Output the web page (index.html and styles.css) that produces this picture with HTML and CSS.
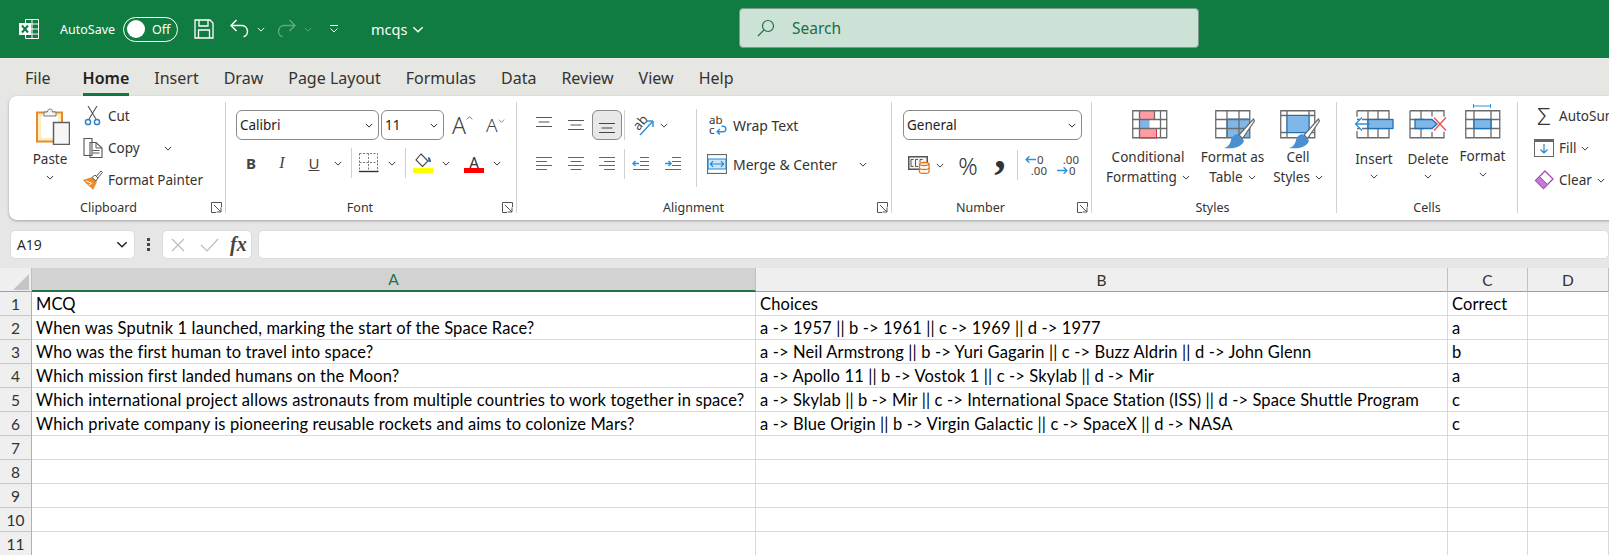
FILE: index.html
```html
<!DOCTYPE html>
<html>
<head>
<meta charset="utf-8">
<title>mcqs - Excel</title>
<link rel="stylesheet" href="styles.css">
</head>
<body>
<svg class="defs" width="0" height="0">
  <symbol id="chev" viewBox="0 0 10 6"><path d="M1 1l4 4 4-4" fill="none" stroke="currentColor" stroke-width="1.2"/></symbol>
  <symbol id="launch" viewBox="0 0 11 11"><path d="M10.500 5V.5H.5v10H5M3 3l7 7M10 5.500V10H5.500" fill="none" stroke="#555" stroke-width="1"/></symbol>
  <symbol id="brush" viewBox="0 0 40 39"><path d="M38.500 9L24 25l3.500 3.500L39.500 11z" fill="#fff" stroke="#666" stroke-width="1.200"/><path d="M22.500 24l6.500 6.500c-1 5-8 9-20 7.500 4-1 6-3.500 7-8 .5-3 3-5.500 6.500-6z" fill="#4a90d0"/></symbol>
</svg>

<header class="titlebar">
  <svg class="logo" width="20" height="20" viewBox="0 0 20 20">
    <path d="M6.500.5h13v19h-13zM13 .5v19M6.500 5h13M6.500 10h13M6.500 15h13" fill="none" stroke="#fff"/>
    <rect y="4" width="12" height="12" fill="#fff"/>
    <path d="M3 6.500l6 7M9 6.500l-6 7" stroke="#107c41" stroke-width="2"/>
  </svg>
  <span class="autosave">AutoSave</span>
  <span class="toggle"><i class="knob"></i>Off</span>
  <svg class="qat save" width="20" height="20" viewBox="0 0 20 20"><path d="M1 1h15l3 3v15H1zM5 1v6h9V1M4.500 19v-8h11v8" fill="none" stroke="#fff" stroke-width="1.300"/></svg>
  <svg class="qat undo" width="19" height="20" viewBox="0 0 19 20"><path d="M1.500 6.500h10a5.800 5.800 0 0 1 2 11.300M6.500 1L1 6.500l5.500 5.500" fill="none" stroke="#fff" stroke-width="1.500"/></svg>
  <svg class="title-chev" width="8" height="5"><use href="#chev"/></svg>
  <svg class="qat redo" width="19" height="20" viewBox="0 0 19 20"><path d="M17.500 6.500h-10a5.800 5.800 0 0 0-2 11.300M12.500 1l5.500 5.500-5.500 5.500" fill="none" stroke="#5fa884" stroke-width="1.500"/></svg>
  <svg class="title-chev dim" width="8" height="5"><use href="#chev"/></svg>
  <svg class="qat more" width="10" height="8" viewBox="0 0 10 8"><path d="M1 .5h8M1.500 3.500L5 7l3.500-3.500" fill="none" stroke="#fff" stroke-width="1"/></svg>
  <span class="docname">mcqs</span>
  <svg class="doc-chev" width="12" height="7"><use href="#chev"/></svg>
  <div class="search">
    <svg width="18" height="18" viewBox="0 0 18 18"><circle cx="11" cy="7" r="5.500" fill="none" stroke="#1f6e43" stroke-width="1.200"/><path d="M7 11l-6 6" stroke="#1f6e43" stroke-width="1.200"/></svg>
    <span>Search</span>
  </div>
</header>

<nav class="tabs">
  <span class="tab">File</span>
  <span class="tab active">Home</span>
  <span class="tab">Insert</span>
  <span class="tab">Draw</span>
  <span class="tab">Page Layout</span>
  <span class="tab">Formulas</span>
  <span class="tab">Data</span>
  <span class="tab">Review</span>
  <span class="tab">View</span>
  <span class="tab">Help</span>
</nav>

<section class="ribbon">

  <div class="group g-clip">
    <div class="group-body">
      <div class="paste">
        <svg width="34" height="38" viewBox="0 0 34 38">
          <rect x="1" y="5.500" width="25" height="29" fill="#fdeec2" stroke="#e8892b" stroke-width="2"/>
          <rect x="5" y="9" width="17" height="22" fill="#fff"/>
          <path d="M8 9V5h3.500c0-4 5-4 5 0H20v4z" fill="#f4f4f4" stroke="#777"/>
          <rect x="17.500" y="15.500" width="16" height="22" fill="#f6f6f6" stroke="#5f5f5f" stroke-width="1.500"/>
        </svg>
        <span class="paste-label">Paste</span>
        <svg class="chev" width="8" height="5"><use href="#chev"/></svg>
      </div>
      <div class="small-col">
        <div class="small-row">
          <svg width="20" height="20" viewBox="0 0 20 20"><path d="M5 0l8 13M14 0L6 13" stroke="#555" stroke-width="1.100" fill="none"/><circle cx="5" cy="16" r="2.600" fill="#fff" stroke="#2b83c6" stroke-width="1.500"/><circle cx="14" cy="16" r="2.600" fill="#fff" stroke="#2b83c6" stroke-width="1.500"/></svg>
          <span>Cut</span>
        </div>
        <div class="small-row">
          <svg width="20" height="20" viewBox="0 0 20 20"><path d="M1 .5h8v17H1zM7 4.500h6l6 5.500v9.500H7z" fill="#fff" stroke="#555" stroke-width="1.100"/><path d="M13 4.500V10h6M9.500 12.500h7M9.500 15h7" fill="none" stroke="#555"/></svg>
          <span>Copy</span>
          <svg class="chev copy-chev" width="8" height="5"><use href="#chev"/></svg>
        </div>
        <div class="small-row">
          <svg width="20" height="20" viewBox="0 0 20 20"><path d="M0 10l9-3 5 5-4 8c-1-2-6-5-10-10z" fill="#ed8b2d"/><path d="M3 11l5 2M6 15l3-2" stroke="#fff"/><path d="M12 8l6-7 1.500 1.500-6 7z" fill="#fff" stroke="#555"/><path d="M9 7.500l3-2.500 3 3-2 3z" fill="#fff" stroke="#555"/></svg>
          <span>Format Painter</span>
        </div>
      </div>
    </div>
    <div class="group-label">Clipboard</div>
    <svg class="launcher" width="11" height="11"><use href="#launch"/></svg>
  </div>

  <div class="group g-font">
    <div class="group-body rows font-rows">
      <div class="row">
        <div class="combo font-name"><span>Calibri</span><svg width="8" height="5"><use href="#chev"/></svg></div>
        <div class="combo font-size"><span>11</span><svg width="8" height="5"><use href="#chev"/></svg></div>
        <span class="grow">A<svg width="7" height="4" viewBox="0 0 10 6"><path d="M1 5l4-4 4 4" fill="none" stroke="currentColor" stroke-width="1.500"/></svg></span>
        <span class="shrink">A<svg width="7" height="4"><use href="#chev"/></svg></span>
      </div>
      <div class="row">
        <span class="slot w30 bold">B</span>
        <span class="slot w32 italic">I</span>
        <span class="slot w32 under">U</span>
        <span class="slot w16"><svg class="chev" width="8" height="5"><use href="#chev"/></svg></span>
        <i class="vsep m55"></i>
        <span class="slot w24">
          <svg width="20" height="20" viewBox="0 0 20 20"><path d="M.5.500h18v18M.5.500v18M9.500.500v18M.5 9.500h18" fill="none" stroke="#777" stroke-dasharray="2 1.500"/><path d="M0 18.500h19.500" stroke="#333" stroke-width="1.400"/></svg>
        </span>
        <span class="slot w22"><svg class="chev" width="8" height="5"><use href="#chev"/></svg></span>
        <i class="vsep m25"></i>
        <span class="slot w24 swatch-slot">
          <svg width="20" height="20" viewBox="0 0 20 20"><path d="M8 1l7 7-5.500 5.500L3 7z" fill="#fff" stroke="#444" stroke-width="1.100"/><path d="M15 4c2 0 3 2 3 5h-2.500z" fill="#2b6ea8"/><rect y="15" width="20" height="5" fill="#ffff00"/></svg>
        </span>
        <span class="slot w22"><svg class="chev" width="8" height="5"><use href="#chev"/></svg></span>
        <span class="slot w24 color-a">A</span>
        <span class="slot w22"><svg class="chev" width="8" height="5"><use href="#chev"/></svg></span>
      </div>
    </div>
    <div class="group-label">Font</div>
    <svg class="launcher" width="11" height="11"><use href="#launch"/></svg>
  </div>

  <div class="group g-align">
    <div class="group-body align-body">
      <div class="rows align-rows">
        <div class="row">
          <span class="slot w32"><svg width="18" height="20" viewBox="0 0 18 20"><path d="M1 2.500h16M3.500 7h11M1 11.500h16" stroke="#555" fill="none"/></svg></span>
          <span class="slot w32"><svg width="18" height="20" viewBox="0 0 18 20"><path d="M1 5.500h16M3.500 10h11M1 14.500h16" stroke="#555" fill="none"/></svg></span>
          <span class="slot w30 pressed"><svg width="18" height="20" viewBox="0 0 18 20"><path d="M1 8.500h16M3.500 13h11M1 17.500h16" stroke="#444" fill="none"/></svg></span>
          <i class="vsep m3"></i>
          <span class="slot orient-slot">
            <svg width="22" height="24" viewBox="0 0 22 24"><path d="M7 22L20 8M20 8h-6M20 8v6" stroke="#2b93dc" stroke-width="1.500" fill="none"/><text x="1" y="14" class="orient" transform="rotate(-50 8 11)">ab</text></svg>
          </span>
          <span class="slot w18"><svg class="chev" width="8" height="5"><use href="#chev"/></svg></span>
        </div>
        <div class="row">
          <span class="slot w32"><svg width="18" height="18" viewBox="0 0 18 18"><path d="M1 2.500h16M1 6.500h11M1 10.500h16M1 14.500h11" stroke="#666" fill="none"/></svg></span>
          <span class="slot w32"><svg width="18" height="18" viewBox="0 0 18 18"><path d="M1 2.500h16M3.500 6.500h11M1 10.500h16M3.500 14.500h11" stroke="#666" fill="none"/></svg></span>
          <span class="slot w30"><svg width="18" height="18" viewBox="0 0 18 18"><path d="M1 2.500h16M6 6.500h11M1 10.500h16M6 14.500h11" stroke="#666" fill="none"/></svg></span>
          <i class="vsep m3"></i>
          <span class="slot w32"><svg width="18" height="18" viewBox="0 0 18 18"><path d="M8 2.500h9M8 6.500h9M8 10.500h9M1 14.500h16" stroke="#666" fill="none"/><path d="M1 8.500h6M3.500 6L1 8.500 3.500 11" stroke="#2b93dc" fill="none" stroke-width="1.500"/></svg></span>
          <span class="slot w32"><svg width="18" height="18" viewBox="0 0 18 18"><path d="M8 2.500h9M8 6.500h9M8 10.500h9M1 14.500h16" stroke="#666" fill="none"/><path d="M1 8.500h6M4.500 6L7 8.500 4.500 11" stroke="#2b93dc" fill="none" stroke-width="1.500"/></svg></span>
        </div>
      </div>
      <i class="vsep tall"></i>
      <div class="rows wrap-col">
        <div class="row wrap-row">
          <span class="wrap-ic"><span class="wrap-ab">ab</span><span class="wrap-c">c</span>
            <svg width="11" height="11" viewBox="0 0 10 10"><path d="M1 7h5.500a2.500 2.500 0 0 0 0-5H5M3.500 4.500L1 7l2.500 2.500" fill="none" stroke="#2b93dc" stroke-width="1.300"/></svg>
          </span>
          <span>Wrap Text</span>
        </div>
        <div class="row wrap-row">
          <svg class="merge-ic" width="20" height="20" viewBox="0 0 18 18"><rect x=".5" y=".5" width="17" height="17" fill="#fff" stroke="#666"/><rect x="1" y="4.500" width="16" height="9" fill="#cfe6f8" stroke="#2b93dc"/><path d="M3 9h12M5.500 6.500L3 9l2.500 2.500M12.500 6.500L15 9l-2.500 2.500" fill="none" stroke="#2b83c6"/></svg>
          <span>Merge &amp; Center</span>
          <svg class="chev merge-chev" width="8" height="5"><use href="#chev"/></svg>
        </div>
      </div>
    </div>
    <div class="group-label">Alignment</div>
    <svg class="launcher" width="11" height="11"><use href="#launch"/></svg>
  </div>

  <div class="group g-num">
    <div class="group-body rows">
      <div class="row">
        <div class="combo num-format"><span>General</span><svg width="8" height="5"><use href="#chev"/></svg></div>
      </div>
      <div class="row">
        <span class="slot money">
          <svg width="22" height="18" viewBox="0 0 22 18">
            <rect x=".75" y=".75" width="18.500" height="12.500" fill="#f4f4f4" stroke="#555" stroke-width="1.500"/>
            <path d="M5.500 3.500H3v7h2.500M10 3.500H7.500v7H10M14.500 3.500H12v3" fill="none" stroke="#555"/>
            <path d="M11.500 8c0-2 9.500-2 9.500 0v8c0 2-9.500 2-9.500 0z" fill="#fff" stroke="#e3761c" stroke-width="1.300"/>
            <path d="M11.500 8c0 2 9.500 2 9.500 0M11.500 12c0 2 9.500 2 9.500 0" fill="none" stroke="#e3761c" stroke-width="1.300"/>
          </svg>
        </span>
        <span class="slot w20"><svg class="chev" width="8" height="5"><use href="#chev"/></svg></span>
        <span class="slot percent">%</span>
        <span class="slot comma">,</span>
        <i class="vsep num-sep"></i>
        <span class="slot dec">
          <svg width="11" height="9" viewBox="0 0 10 8"><path d="M10 4H1M4 1L1 4l3 3" fill="none" stroke="#2b93dc" stroke-width="1.200"/></svg><b>0</b><em>.00</em>
        </span>
        <span class="slot dec dec2">
          <em>.00</em><svg width="11" height="9" viewBox="0 0 10 8"><path d="M0 4h9M6 1l3 3-3 3" fill="none" stroke="#2b93dc" stroke-width="1.200"/></svg><b>0</b>
        </span>
      </div>
    </div>
    <div class="group-label">Number</div>
    <svg class="launcher" width="11" height="11"><use href="#launch"/></svg>
  </div>

  <div class="group g-styles">
    <div class="group-body big-row">
      <div class="big w112">
        <svg class="tall-ic" width="36" height="39" viewBox="0 0 36 39">
          <rect x="7.500" y=".5" width="15" height="9" fill="#ff9ba3" stroke="#d8343c"/>
          <rect x="7.500" y="9.500" width="10" height="9" fill="#7fb8e8"/>
          <rect x="7.500" y="18.500" width="17" height="9.500" fill="#ff9ba3" stroke="#d8343c"/>
          <path d="M.75.75h34v27h-34zM7.500.5v28M22.500.5v9M28.500.5v28M.5 9.500h35M.5 18.500h35" fill="none" stroke="#6b6b6b" stroke-width="1.300"/>
        </svg>
        <span class="big-text">Conditional<br>Formatting<svg class="chev inline" width="8" height="5"><use href="#chev"/></svg></span>
      </div>
      <div class="big w57">
        <svg class="tall-ic" width="40" height="39" viewBox="0 0 40 39">
          <rect x="12" y="9" width="23" height="19" fill="#7fb8e8"/>
          <path d="M12 9h23M12 9v19" stroke="#1f6fb5" fill="none"/>
          <path d="M.75.75h34v27h-34zM12 .5v28M24 .5v28M.5 9.500h35M.5 18.500h35" fill="none" stroke="#6b6b6b" stroke-width="1.300"/>
          <use href="#brush" width="40" height="39"/>
        </svg>
        <span class="big-text">Format as<br>Table<svg class="chev inline" width="8" height="5"><use href="#chev"/></svg></span>
      </div>
      <div class="big w74">
        <svg class="tall-ic" width="40" height="39" viewBox="0 0 40 39">
          <path d="M.75.75h34v27h-34zM7 .5v28M29 .5v28M.5 5.500h35M.5 22.500h35" fill="none" stroke="#6b6b6b" stroke-width="1.300"/>
          <rect x="7" y="5.500" width="22" height="17" fill="#7fb8e8" stroke="#1f6fb5"/>
          <use href="#brush" width="40" height="39"/>
        </svg>
        <span class="big-text">Cell<br>Styles<svg class="chev inline" width="8" height="5"><use href="#chev"/></svg></span>
      </div>
    </div>
    <div class="group-label">Styles</div>
  </div>

  <div class="group g-cells">
    <div class="group-body big-row cells-pad">
      <div class="big w52">
        <svg width="40" height="29" viewBox="0 0 40 29">
          <path d="M3 .75h32v27H3M3 .75v6M3 21v7M14 .5v28M24 .5v28M3 9.500h32M3 18.500h32" fill="none" stroke="#6b6b6b" stroke-width="1.300"/>
          <rect x="14" y="9.500" width="25" height="9" fill="#7fb8e8" stroke="#1f6fb5" stroke-width="1.300"/>
          <path d="M16 14H2M8 7.500L1.500 14 8 20.500" fill="#fff" stroke="#2b93dc" stroke-width="1.300"/>
        </svg>
        <span class="big-text cell-text">Insert</span>
        <svg class="chev" width="8" height="5"><use href="#chev"/></svg>
      </div>
      <div class="big w56">
        <svg width="38" height="29" viewBox="0 0 38 29">
          <path d="M1 .75h34v6M1 .75v27h34v-6M1 9.500h14M1 18.500h14M12 .5v28M23 .5v6M23 22v6" fill="none" stroke="#6b6b6b" stroke-width="1.300"/>
          <path d="M6 9.500h17l5 4.500-5 4.500H6z" fill="#7fb8e8" stroke="#1f6fb5" stroke-width="1.300"/>
          <path d="M25 7.500l12 13M37 7.500l-12 13" stroke="#ee4b4b" stroke-width="1.300"/>
        </svg>
        <span class="big-text cell-text">Delete</span>
        <svg class="chev" width="8" height="5"><use href="#chev"/></svg>
      </div>
      <div class="big w53">
        <svg class="fmt-ic" width="36" height="35" viewBox="0 0 36 35">
          <path d="M8 2h18M8.500 0v4M25.500 0v4" stroke="#2b93dc" fill="none"/>
          <path d="M.75 6.750h34v27h-34zM9 6.500v28M26 6.500v28M.5 15.500h35M.5 24.500h35" fill="none" stroke="#6b6b6b" stroke-width="1.300"/>
          <rect x="9" y="15.500" width="17" height="9" fill="#7fb8e8" stroke="#1f6fb5" stroke-width="1.300"/>
        </svg>
        <span class="big-text fmt-text">Format</span>
        <svg class="chev" width="8" height="5"><use href="#chev"/></svg>
      </div>
    </div>
    <div class="group-label">Cells</div>
  </div>

  <div class="group g-edit">
    <div class="group-body">
      <div class="small-col edit-col">
        <div class="small-row"><span class="sigma">&Sigma;</span><span>AutoSum</span></div>
        <div class="small-row">
          <svg width="20" height="18" viewBox="0 0 20 18"><rect x=".5" y=".5" width="19" height="17" fill="#fff" stroke="#666"/><rect y="0" width="20" height="3" fill="#666"/><path d="M10 5v9M6.500 10.500L10 14l3.500-3.500" fill="none" stroke="#2b83c6" stroke-width="1.200"/></svg>
          <span>Fill</span>
          <svg class="chev" width="8" height="5"><use href="#chev"/></svg>
        </div>
        <div class="small-row">
          <svg width="20" height="20" viewBox="0 0 20 20"><path d="M11 1l8 8-9.500 9.500-8-8z" fill="#fff" stroke="#a04eb5" stroke-width="1.300"/><path d="M5.500 6.500l8 8-4 4-8-8z" fill="#c678d6" stroke="#a04eb5"/></svg>
          <span>Clear</span>
          <svg class="chev" width="8" height="5"><use href="#chev"/></svg>
        </div>
      </div>
    </div>
  </div>
</section>

<div class="formula-bar">
  <div class="namebox"><span>A19</span><svg width="12" height="7"><use href="#chev"/></svg></div>
  <span class="dots"><i></i><i></i><i></i></span>
  <div class="fx-box">
    <svg width="16" height="16" viewBox="0 0 16 16"><path d="M2 2l12 12M14 2L2 14" stroke="#bdbdbd" stroke-width="1.200"/></svg>
    <svg width="20" height="16" viewBox="0 0 20 16"><path d="M2 8l6 6L19 2" fill="none" stroke="#bdbdbd" stroke-width="1.200"/></svg>
    <span class="fx">fx</span>
  </div>
  <div class="formula-input"></div>
</div>

<table class="sheet">
  <colgroup><col class="c0"><col class="ca"><col class="cb"><col class="cc"><col class="cd"></colgroup>
  <tr class="heads">
    <th class="corner"><svg width="16" height="16" viewBox="0 0 16 16"><path d="M16 0v16H0z" fill="#c4c4c4"/></svg></th>
    <th class="sel">A</th><th>B</th><th>C</th><th>D</th>
  </tr>
  <tr><th>1</th><td>MCQ</td><td>Choices</td><td>Correct</td><td></td></tr>
  <tr><th>2</th><td>When was Sputnik 1 launched, marking the start of the Space Race?</td><td>a -&gt; 1957 || b -&gt; 1961 || c -&gt; 1969 || d -&gt; 1977</td><td>a</td><td></td></tr>
  <tr><th>3</th><td>Who was the first human to travel into space?</td><td>a -&gt; Neil Armstrong || b -&gt; Yuri Gagarin || c -&gt; Buzz Aldrin || d -&gt; John Glenn</td><td>b</td><td></td></tr>
  <tr><th>4</th><td>Which mission first landed humans on the Moon?</td><td>a -&gt; Apollo 11 || b -&gt; Vostok 1 || c -&gt; Skylab || d -&gt; Mir</td><td>a</td><td></td></tr>
  <tr><th>5</th><td>Which international project allows astronauts from multiple countries to work together in space?</td><td>a -&gt; Skylab || b -&gt; Mir || c -&gt; International Space Station (ISS) || d -&gt; Space Shuttle Program</td><td>c</td><td></td></tr>
  <tr><th>6</th><td>Which private company is pioneering reusable rockets and aims to colonize Mars?</td><td>a -&gt; Blue Origin || b -&gt; Virgin Galactic || c -&gt; SpaceX || d -&gt; NASA</td><td>c</td><td></td></tr>
  <tr><th>7</th><td></td><td></td><td></td><td></td></tr>
  <tr><th>8</th><td></td><td></td><td></td><td></td></tr>
  <tr><th>9</th><td></td><td></td><td></td><td></td></tr>
  <tr><th>10</th><td></td><td></td><td></td><td></td></tr>
  <tr><th>11</th><td></td><td></td><td></td><td></td></tr>
</table>
</body>
</html>
```

FILE: styles.css
```css
* {
  box-sizing: border-box;
}
html, body {
  margin: 0;
  height: 555px;
  overflow: hidden;
}
body {
  width: 1609px;
  background: #e6e6e6;
  font-family: "Noto Sans", sans-serif;
  font-size: 13.5px;
  color: #333;
}
svg {
  display: block;
  flex: none;
}
.defs {
  position: absolute;
}
i, em {
  font-style: normal;
}

/* title bar */
.titlebar {
  height: 58px;
  background: #107c41;
  color: #fff;
  display: flex;
  align-items: center;
  padding-left: 19px;
}
.autosave {
  margin-left: 21px;
  font-size: 12.5px;
  width: 63px;
}
.toggle {
  width: 55px;
  height: 25px;
  border: 1.500px solid #fff;
  border-radius: 13px;
  display: flex;
  align-items: center;
  padding-left: 3px;
  font-size: 12.5px;
  gap: 7px;
}
.knob {
  width: 18px;
  height: 18px;
  border-radius: 50%;
  background: #fff;
}
.save {
  margin-left: 16px;
}
.undo {
  margin-left: 16px;
}
.title-chev {
  margin-left: 8px;
  color: #fff;
}
.title-chev.dim {
  color: #5fa884;
}
.redo {
  margin-left: 12px;
}
.more {
  margin-left: 17px;
}
.docname {
  margin-left: 32px;
  font-size: 14.5px;
  width: 36px;
}
.doc-chev {
  margin-left: 5px;
  color: #fff;
}
.search {
  margin-left: 315px;
  margin-top: -2px;
  width: 460px;
  height: 40px;
  background: #cde2d7;
  border: 1px solid #7c9c8a;
  border-radius: 4px;
  color: #1f6e43;
  font-size: 15.5px;
  display: flex;
  align-items: center;
  gap: 17px;
  padding-left: 17px;
}

/* tabs */
.tabs {
  height: 38px;
  background: #e6e6e2;
  display: flex;
  padding-left: 25px;
  gap: 25px;
  font-size: 16px;
  line-height: 40px;
  color: #333;
}
.tab {
  height: 38px;
}
.tab.active {
  font-weight: 600;
  border-bottom: 3px solid #107c41;
  color: #222;
  margin-left: 7px;
}

/* ribbon */
.ribbon {
  margin-left: 9px;
  height: 124px;
  width: 1620px;
  background: #fff;
  border-radius: 8px;
  box-shadow: 0 1px 3px rgba(0, 0, 0, .3);
  display: flex;
  align-items: flex-start;
  position: relative;
}
.group {
  margin-top: 6px;
  height: 111px;
  border-right: 1px solid #d0d0d0;
  display: flex;
  flex-direction: column;
  position: relative;
  flex: none;
}
.g-clip { width: 217px; }
.g-font { width: 291px; padding-left: 10px; }
.g-align { width: 375px; padding-left: 11px; }
.g-num { width: 200px; padding-left: 11px; }
.g-styles { width: 245px; }
.g-cells { width: 181px; }
.g-edit { width: 100px; border-right: 0; }
.group-body {
  height: 100px;
  display: flex;
  flex: none;
}
.group-label {
  height: 12px;
  line-height: 12px;
  text-align: center;
  font-size: 12.5px;
  color: #333;
}
.g-clip .group-label { padding-right: 17px; }
.g-font .group-label { margin-left: -10px; padding-right: 22px; }
.g-align .group-label { margin-left: -11px; padding-right: 21px; }
.g-num .group-label { margin-left: -11px; padding-right: 22px; }
.g-styles .group-label { padding-right: 3px; }
.launcher {
  position: absolute;
  right: 3px;
  bottom: 0;
}

.chev {
  color: #333;
}
.paste {
  margin-left: 21px;
  padding-top: 5px;
  width: 40px;
  display: flex;
  flex-direction: column;
  align-items: center;
}
.paste svg:first-child {
  margin-left: 6px;
}
.paste-label {
  margin-top: 5px;
  line-height: 18px;
}
.paste .chev {
  margin-top: 7px;
}
.small-col {
  margin-left: 13px;
  padding-top: 2px;
  display: flex;
  flex-direction: column;
  gap: 8px;
}
.small-row {
  height: 24px;
  display: flex;
  align-items: center;
  gap: 5px;
}
.copy-chev {
  margin-left: 19px;
}
.edit-col {
  margin-left: 16px;
}
.sigma {
  width: 20px;
  font-size: 24px;
  font-weight: 300;
  line-height: 24px;
  text-align: center;
}

.rows {
  padding-top: 8px;
  display: flex;
  flex-direction: column;
  gap: 10px;
}
.font-rows {
  gap: 8px;
}
.row {
  height: 30px;
  display: flex;
  align-items: center;
}
.slot {
  height: 30px;
  display: flex;
  align-items: center;
  justify-content: center;
  flex: none;
}
.w16 { width: 16px; }
.w18 { width: 18px; }
.w20 { width: 20px; }
.w22 { width: 22px; }
.w24 { width: 24px; }
.w30 { width: 30px; }
.w32 { width: 32px; }
.combo {
  height: 30px;
  background: #fff;
  border: 1px solid #8a8a8a;
  border-radius: 6px;
  display: flex;
  align-items: center;
  justify-content: space-between;
  padding: 0 5px 0 3px;
  color: #222;
}
.font-name { width: 143px; }
.font-size { width: 63px; margin-left: 2px; padding-left: 3px; }
.num-format { width: 179px; }
.grow, .shrink {
  display: flex;
  font-weight: 300;
  color: #444;
}
.grow {
  font-size: 23px;
  margin-left: 8px;
  width: 34px;
}
.shrink {
  font-size: 19px;
  width: 22px;
}
.grow svg, .shrink svg {
  color: #2b83c6;
  margin-top: 7px;
}
.bold {
  font-weight: 700;
  font-size: 15px;
  color: #444;
}
.italic {
  font-style: italic;
  font-size: 16px;
  color: #444;
  font-family: "Liberation Serif", serif;
}
.under {
  text-decoration: underline;
  font-size: 15px;
  color: #444;
}
.vsep {
  display: block;
  width: 1px;
  height: 30px;
  background: #d0d0d0;
  flex: none;
}
.m55 { margin: 0 5px; }
.m25 { margin: 0 5px 0 2px; }
.m3 { margin-left: 2px; }
.color-a {
  margin-left: 5px;
  font-size: 16px;
  line-height: 20px;
  position: relative;
}
.color-a::after {
  content: "";
  position: absolute;
  left: 2px;
  right: 2px;
  bottom: 5px;
  height: 5px;
  background: #f00;
}
.align-body {
  align-items: flex-start;
}
.align-rows {
  gap: 9px;
}
.pressed {
  background: #e8e8e8;
  border: 1px solid #8a8a8a;
  border-radius: 6px;
}
.orient-slot {
  margin-left: 8px;
  width: 22px;
}
.orient {
  font-size: 13px;
  fill: #444;
  font-family: "Noto Sans", sans-serif;
}
.tall {
  height: 78px;
  margin: 7px 10px 0 7px;
}
.wrap-col {
  gap: 9px;
  font-size: 14px;
}
.wrap-row {
  gap: 6px;
  width: 170px;
}
.wrap-ic {
  position: relative;
  width: 18px;
  height: 22px;
  margin-left: 2px;
  display: block;
  font-size: 11.5px;
  line-height: 11px;
  flex: none;
}
.wrap-ab {
  position: absolute;
  left: 0;
  top: 0;
}
.wrap-c {
  position: absolute;
  left: 0;
  top: 10px;
}
.wrap-ic svg {
  position: absolute;
  left: 7px;
  top: 10px;
}
.merge-chev {
  margin-left: 16px;
}
.money {
  width: 27px;
  justify-content: flex-end;
}
.percent {
  width: 36px;
  font-size: 24px;
  font-weight: 300;
}
.comma {
  width: 28px;
  font-family: "Liberation Serif", serif;
  font-size: 46px;
  font-weight: 700;
  line-height: 20px;
  padding-bottom: 24px;
}
.num-sep {
  margin: 0 7px 0 3px;
}
.dec {
  width: 22px;
  display: grid;
  grid-template-columns: 12px 10px;
  align-content: center;
  justify-content: start;
  align-items: center;
  font-size: 11.5px;
  line-height: 11px;
  color: #444;
}
.dec b {
  font-weight: 400;
}
.dec em {
  grid-column: 1 / 3;
  text-align: right;
}
.dec2 {
  margin-left: 10px;
}
.big-row {
  align-items: flex-start;
}
.big {
  padding-top: 8px;
  display: flex;
  flex-direction: column;
  align-items: center;
  flex: none;
}
.w112 { width: 112px; }
.w57 { width: 57px; }
.w74 { width: 74px; }
.w52 { width: 52px; }
.w56 { width: 56px; }
.w53 { width: 53px; }
.tall-ic {
  margin-bottom: -10px;
  transform: translateX(2px);
}
.big-text {
  margin-top: 8px;
  line-height: 20px;
  text-align: center;
  white-space: nowrap;
}
.inline {
  display: inline-block;
  margin-left: 5px;
  vertical-align: 2px;
}
.cells-pad {
  padding-left: 11px;
}
.cell-text {
  margin-top: 10px;
  margin-bottom: 5px;
}
.fmt-ic {
  margin-top: -6px;
}
.fmt-text {
  margin-top: 7px;
  margin-bottom: 6px;
}

/* formula bar */
.formula-bar {
  height: 48px;
  padding: 10px 0 9px 10px;
  display: flex;
  align-items: stretch;
}
.namebox {
  width: 125px;
  background: #fff;
  border: 1px solid #dcdcdc;
  border-radius: 5px;
  display: flex;
  align-items: center;
  justify-content: space-between;
  padding: 0 6px;
  font-family: "Open Sans", sans-serif;
  font-size: 14px;
  color: #222;
}
.dots {
  width: 27px;
  display: flex;
  flex-direction: column;
  align-items: center;
  justify-content: center;
  gap: 2px;
}
.dots i {
  width: 3px;
  height: 3px;
  background: #444;
}
.fx-box {
  width: 90px;
  background: #fff;
  border: 1px solid #dcdcdc;
  border-radius: 5px;
  display: flex;
  align-items: center;
  padding-left: 7px;
  gap: 13px;
}
.fx {
  font-family: "Liberation Serif", serif;
  font-style: italic;
  font-weight: 700;
  font-size: 20px;
  color: #444;
  margin-left: -2px;
}
.formula-input {
  margin-left: 6px;
  flex: 1;
  background: #fff;
  border: 1px solid #dcdcdc;
  border-radius: 5px;
}

/* sheet */
.sheet {
  width: 1609px;
  table-layout: fixed;
  border-collapse: separate;
  border-spacing: 0;
  background: #fff;
  font-family: "Lato", sans-serif;
  font-size: 16.5px;
  letter-spacing: .13px;
  color: #000;
}
.c0 { width: 32px; }
.ca { width: 724px; }
.cb { width: 692px; }
.cc { width: 80px; }
.cd { width: 81px; }
.sheet tr {
  height: 24px;
}
.sheet td {
  padding: 0 3px 0 4px;
  height: 24px;
  line-height: 20px;
  white-space: nowrap;
  overflow: hidden;
  border-right: 1px solid #d9d9d9;
  border-bottom: 1px solid #d9d9d9;
}
.sheet th {
  padding: 0;
  height: 24px;
  font-weight: 400;
  line-height: 20px;
  background: #efefef;
  border-right: 1px solid #b0b0b0;
  border-bottom: 1px solid #c8c8c8;
  font-family: "Lato", sans-serif;
  font-size: 15.5px;
  color: #333;
}
.heads th {
  background: #efefef;
  border-right: 1px solid #c0c0c0;
  border-bottom: 1px solid #9e9e9e;
}
.heads .sel {
  background: #d2d2d2;
  color: #217346;
  border-bottom: 2px solid #217346;
}
.corner svg {
  margin: 4px 0 0 13px;
}
```
